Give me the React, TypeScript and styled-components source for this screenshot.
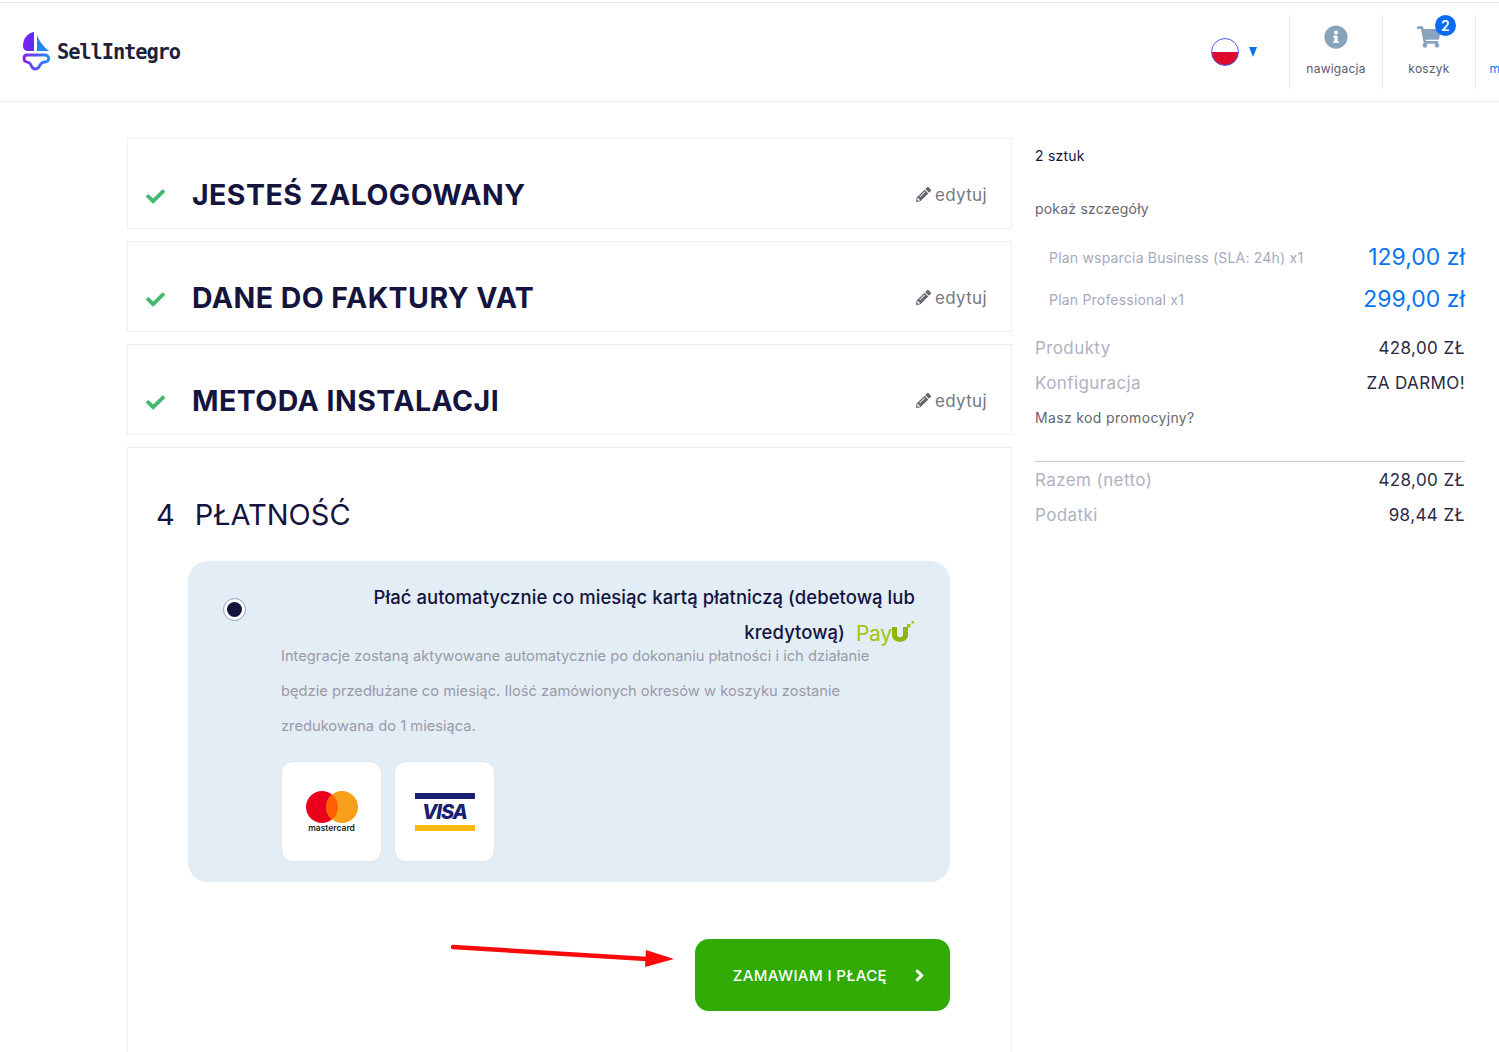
import React from "react";
import styled, { createGlobalStyle } from "styled-components";
import { FaCheck, FaPencilAlt, FaInfoCircle, FaShoppingCart, FaChevronRight } from "react-icons/fa";

const GlobalStyle = createGlobalStyle`
  html, body {
    margin: 0;
    padding: 0;
    background: #fff;
    overflow: hidden;
  }
  body {
    font-family: Inter, "Open Sans", "Liberation Sans", sans-serif;
    color: #14143f;
  }
`;

const Page = styled.div`
  width: 1499px;
  height: 1052px;
  overflow: hidden;
`;

const Header = styled.header`
  height: 98px;
  margin-top: 2px;
  border-top: 1px solid #e5e6ea;
  border-bottom: 1px solid #e6edf5;
  display: flex;
  align-items: flex-start;
  overflow: hidden;
`;

const Brand = styled.div`
  display: flex;
  align-items: center;
  gap: 6px;
  margin: 29px 0 0 22px;
  font-family: "DejaVu Sans Mono", monospace;
  font-size: 20.4px;
  font-weight: 700;
  letter-spacing: -1.1px;
  color: #1d1f3d;
`;

const HeaderRight = styled.div`
  margin-left: auto;
  margin-right: -69px;
  display: flex;
  align-items: flex-start;
  padding-top: 12px;
  flex: none;
  width: 357px;
`;

const Lang = styled.div`
  display: flex;
  align-items: center;
  gap: 10px;
  width: 78px;
  height: 74px;
  flex: none;
`;

const Flag = styled.div`
  width: 26px;
  height: 26px;
  border-radius: 50%;
  border: 1px solid #4b5ef0;
  background: linear-gradient(#fff 50%, #dc0a2d 50%);
  flex: none;
`;

const Caret = styled.div`
  width: 0;
  height: 0;
  border-left: 4.5px solid transparent;
  border-right: 4.5px solid transparent;
  border-top: 10px solid #0a74f0;
`;

const NavItem = styled.div<{ $active?: boolean }>`
  width: 93px;
  height: 74px;
  flex: none;
  box-sizing: border-box;
  border-left: 1px solid #e6edf5;
  display: flex;
  flex-direction: column;
  align-items: center;
  padding-top: 10px;
  font-size: 12px;
  letter-spacing: 0.25px;
  color: ${(p) => (p.$active ? "#0a74f0" : "#5a5a72")};
  white-space: nowrap;
`;

const NavIcon = styled.div`
  position: relative;
  height: 24px;
  color: #8aa3bd;
  font-size: 24px;
  line-height: 24px;
  margin-bottom: 12px;
`;

const Badge = styled.span`
  position: absolute;
  top: -10px;
  left: 18px;
  width: 21px;
  height: 21px;
  border-radius: 50%;
  background: #0a6cf0;
  color: #fff;
  font-size: 14px;
  font-weight: 600;
  line-height: 21px;
  text-align: center;
`;

const Main = styled.main`
  display: flex;
  gap: 23px;
  padding: 36px 0 0 127px;
  align-items: flex-start;
`;

const Steps = styled.div`
  width: 885px;
  flex: none;
  display: flex;
  flex-direction: column;
  gap: 12px;
`;

const Step = styled.section`
  height: 91px;
  box-sizing: border-box;
  border: 1px solid #eeeeee;
  display: flex;
  align-items: center;
  padding: 22px 24px 0 18px;
`;

const Check = styled.div`
  color: #45b972;
  font-size: 19px;
  line-height: 1;
  width: 46px;
  flex: none;
  padding-top: 7px;
`;

const StepTitle = styled.h2`
  margin: 0;
  font-size: 28.5px;
  font-weight: 700;
  letter-spacing: 0.45px;
  color: #14143f;
  flex: 1;
`;

const Edit = styled.div`
  display: flex;
  align-items: center;
  gap: 4px;
  font-size: 17px;
  letter-spacing: 0.35px;
  color: #77777f;
  svg {
    font-size: 15px;
    color: #66666e;
  }
`;

const PaymentStep = styled.section`
  height: 640px;
  box-sizing: border-box;
  border: 1px solid #eeeeee;
  padding: 47px 61px 0 28px;
`;

const PaymentTitle = styled.h2`
  margin: 0 0 26px;
  display: flex;
  gap: 20px;
  font-size: 29px;
  line-height: 40px;
  font-weight: 400;
  color: #14143f;
`;

const PaymentBox = styled.div`
  margin-left: 32px;
  height: 321px;
  box-sizing: border-box;
  border-radius: 20px;
  background: #e3edf6;
  display: flex;
  padding: 19px 35px 0 35px;
`;

const Radio = styled.div`
  width: 23px;
  height: 23px;
  margin-top: 18px;
  flex: none;
  box-sizing: border-box;
  border: 1px solid #8fa4c0;
  border-radius: 50%;
  background: #fff;
  display: flex;
  align-items: center;
  justify-content: center;
  &::after {
    content: "";
    width: 15px;
    height: 15px;
    border-radius: 50%;
    background: #14143f;
  }
`;

const PaymentBody = styled.div`
  flex: 1;
  margin-left: 35px;
`;

const LabelLine = styled.div`
  height: 35px;
  display: flex;
  justify-content: flex-end;
  align-items: center;
  font-size: 18.5px;
  font-weight: 500;
  letter-spacing: 0.05px;
  line-height: 35px;
  color: #14143f;
`;

const PayUMark = styled.span`
  display: inline-flex;
  margin: 2px 0 0 10px;
`;

const PaymentNote = styled.p`
  margin: -11px 0 17px;
  font-size: 14.7px;
  line-height: 35px;
  color: #9a9aa6;
`;

const Cards = styled.div`
  display: flex;
  gap: 12px;
`;

const CardTile = styled.div`
  width: 101px;
  height: 101px;
  box-sizing: border-box;
  background: #fff;
  border: 1px solid #dfe6ee;
  border-radius: 12px;
  display: flex;
  flex-direction: column;
  align-items: center;
  justify-content: center;
`;

const MastercardWord = styled.span`
  font-size: 8.5px;
  font-weight: 600;
  line-height: 9px;
  margin-top: 1px;
  color: #231f20;
`;

const ActionRow = styled.div`
  display: flex;
  justify-content: flex-end;
  align-items: flex-start;
  margin-top: 57px;
`;

const SubmitButton = styled.button`
  width: 255px;
  height: 72px;
  margin-left: 20px;
  border: 0;
  border-radius: 14px;
  background: #2fab04;
  color: #fff;
  font-family: inherit;
  font-size: 15px;
  font-weight: 500;
  letter-spacing: 0.4px;
  display: flex;
  align-items: center;
  justify-content: flex-end;
  gap: 26px;
  padding: 0 24px 0 0;
  svg {
    font-size: 13px;
    stroke: currentColor;
    stroke-width: 40px;
  }
`;

const Summary = styled.aside`
  width: 430px;
  flex: none;
  font-size: 14px;
  letter-spacing: 0.2px;
`;

const Count = styled.div`
  margin-top: 9px;
  line-height: 18px;
  color: #14143f;
`;

const Details = styled.div`
  margin-top: 35px;
  line-height: 18px;
  color: #66666e;
`;

const ProductRow = styled.div<{ $first?: boolean }>`
  display: flex;
  justify-content: space-between;
  align-items: center;
  height: 42px;
  padding-left: 14px;
  margin-top: ${(p) => (p.$first ? "18px" : "0")};
  color: #a7a8bc;
`;

const ProductPrice = styled.span`
  font-size: 23px;
  letter-spacing: 0;
  color: #0a74f0;
`;

const TotalRow = styled.div<{ $first?: boolean }>`
  display: flex;
  justify-content: space-between;
  align-items: center;
  height: 35px;
  font-size: 17px;
  letter-spacing: 0.4px;
  color: #b0b1c2;
  margin-top: ${(p) => (p.$first ? "10px" : "0")};
  b {
    font-weight: 400;
    color: #2a2a45;
  }
`;

const Promo = styled.div`
  line-height: 35px;
  letter-spacing: 0.35px;
  color: #66666e;
  margin-bottom: 26px;
`;

const Totals = styled.div`
  border-top: 1px solid #c9ccd4;
`;

const LogoMark = () => (
  <svg width="29" height="40" viewBox="0 0 29 40">
    <defs>
      <linearGradient id="logoSail" x1="0" y1="0" x2="1" y2="0.2">
        <stop offset="0" stopColor="#8a1cf0" />
        <stop offset="1" stopColor="#5a2ef2" />
      </linearGradient>
      <linearGradient id="logoHull" x1="0" y1="0" x2="1" y2="0">
        <stop offset="0" stopColor="#8a1cf0" />
        <stop offset="1" stopColor="#1f8ff5" />
      </linearGradient>
    </defs>
    <path d="M12 0 C6 1 1 6 1 14 C1 17 3 19 6 19 H12 Z" fill="url(#logoSail)" />
    <path d="M15 3 V19 H27 C22 15 17 9 15 3 Z" fill="#2186f3" />
    <path
      d="M5 23 H23 C28 23 28 30 23 30 C20 30 19 31 17.5 34 C15.5 38 11 38 9.5 34 C8.5 31.5 7.5 30.5 5 30 C1 29 1 23 5 23 Z"
      fill="none"
      stroke="url(#logoHull)"
      strokeWidth="2.8"
    />
  </svg>
);

const PayULogo = () => (
  <svg width="60" height="30" viewBox="0 0 60 30">
    <text x="1" y="22" fontFamily="Inter, sans-serif" fontSize="21" fontWeight="400" fill="#a6c307" textLength="36">
      Pay
    </text>
    <path d="M37 8 V16 C37 25 53 25 53 16 V8 H48 V16 C48 19 42 19 42 16 V8 Z" fill="#8fb50a" />
    <rect x="52" y="5" width="3.5" height="3.5" fill="#a6c307" />
    <rect x="56.5" y="2" width="2.5" height="2.5" fill="#a6c307" />
  </svg>
);

const MastercardLogo = () => (
  <svg width="52" height="32" viewBox="0 0 52 32">
    <circle cx="16" cy="16" r="16" fill="#eb001b" />
    <circle cx="36" cy="16" r="16" fill="#f79e1b" />
    <path d="M26 3.5 a16 16 0 0 1 0 25 a16 16 0 0 1 0 -25 Z" fill="#ff5f00" />
  </svg>
);

const VisaLogo = () => (
  <svg width="60" height="38" viewBox="0 0 60 38">
    <rect x="0" y="0" width="60" height="6" fill="#1a2070" />
    <rect x="0" y="32" width="60" height="6" fill="#fdb913" />
    <text
      x="7"
      y="26"
      fontFamily="Inter, sans-serif"
      fontSize="20"
      fontWeight="800"
      fontStyle="italic"
      fill="#1a2070"
      textLength="46"
    >
      VISA
    </text>
  </svg>
);

const RedArrow = () => (
  <svg width="224" height="32" viewBox="0 0 224 32" style={{ flex: "none" }}>
    <path d="M2 8 L196 20" stroke="#fa0a0a" strokeWidth="4.5" strokeLinecap="round" />
    <path d="M195 11 L223 20 L194 28 Z" fill="#fa0a0a" />
  </svg>
);

const doneSteps = ["JESTEŚ ZALOGOWANY", "DANE DO FAKTURY VAT", "METODA INSTALACJI"];

const products = [
  { name: "Plan wsparcia Business (SLA: 24h) x1", price: "129,00 zł" },
  { name: "Plan Professional x1", price: "299,00 zł" },
];

export default function App() {
  return (
    <Page>
      <GlobalStyle />
      <Header>
        <Brand>
          <LogoMark />
          SellIntegro
        </Brand>
        <HeaderRight>
          <Lang>
            <Flag />
            <Caret />
          </Lang>
          <NavItem>
            <NavIcon>
              <FaInfoCircle />
            </NavIcon>
            nawigacja
          </NavItem>
          <NavItem>
            <NavIcon>
              <FaShoppingCart />
              <Badge>2</Badge>
            </NavIcon>
            koszyk
          </NavItem>
          <NavItem $active>
            <NavIcon />
            moje konto
          </NavItem>
        </HeaderRight>
      </Header>

      <Main>
        <Steps>
          {doneSteps.map((title) => (
            <Step key={title}>
              <Check>
                <FaCheck />
              </Check>
              <StepTitle>{title}</StepTitle>
              <Edit>
                <FaPencilAlt />
                edytuj
              </Edit>
            </Step>
          ))}
          <PaymentStep>
            <PaymentTitle>
              <span>4</span>
              <span>PŁATNOŚĆ</span>
            </PaymentTitle>
            <PaymentBox>
              <Radio />
              <PaymentBody>
                <LabelLine>Płać automatycznie co miesiąc kartą płatniczą (debetową lub</LabelLine>
                <LabelLine>
                  kredytową)
                  <PayUMark>
                    <PayULogo />
                  </PayUMark>
                </LabelLine>
                <PaymentNote>
                  Integracje zostaną aktywowane automatycznie po dokonaniu płatności i ich działanie
                  będzie przedłużane co miesiąc. Ilość zamówionych okresów w koszyku zostanie
                  zredukowana do 1 miesiąca.
                </PaymentNote>
                <Cards>
                  <CardTile>
                    <MastercardLogo />
                    <MastercardWord>mastercard</MastercardWord>
                  </CardTile>
                  <CardTile>
                    <VisaLogo />
                  </CardTile>
                </Cards>
              </PaymentBody>
            </PaymentBox>
            <ActionRow>
              <RedArrow />
              <SubmitButton>
                ZAMAWIAM I PŁACĘ
                <FaChevronRight />
              </SubmitButton>
            </ActionRow>
          </PaymentStep>
        </Steps>

        <Summary>
          <Count>2 sztuk</Count>
          <Details>pokaż szczegóły</Details>
          {products.map((item, index) => (
            <ProductRow key={item.name} $first={index === 0}>
              <span>{item.name}</span>
              <ProductPrice>{item.price}</ProductPrice>
            </ProductRow>
          ))}
          <TotalRow $first>
            <span>Produkty</span>
            <b>428,00 ZŁ</b>
          </TotalRow>
          <TotalRow>
            <span>Konfiguracja</span>
            <b>ZA DARMO!</b>
          </TotalRow>
          <Promo>Masz kod promocyjny?</Promo>
          <Totals>
            <TotalRow>
              <span>Razem (netto)</span>
              <b>428,00 ZŁ</b>
            </TotalRow>
            <TotalRow>
              <span>Podatki</span>
              <b>98,44 ZŁ</b>
            </TotalRow>
          </Totals>
        </Summary>
      </Main>
    </Page>
  );
}
